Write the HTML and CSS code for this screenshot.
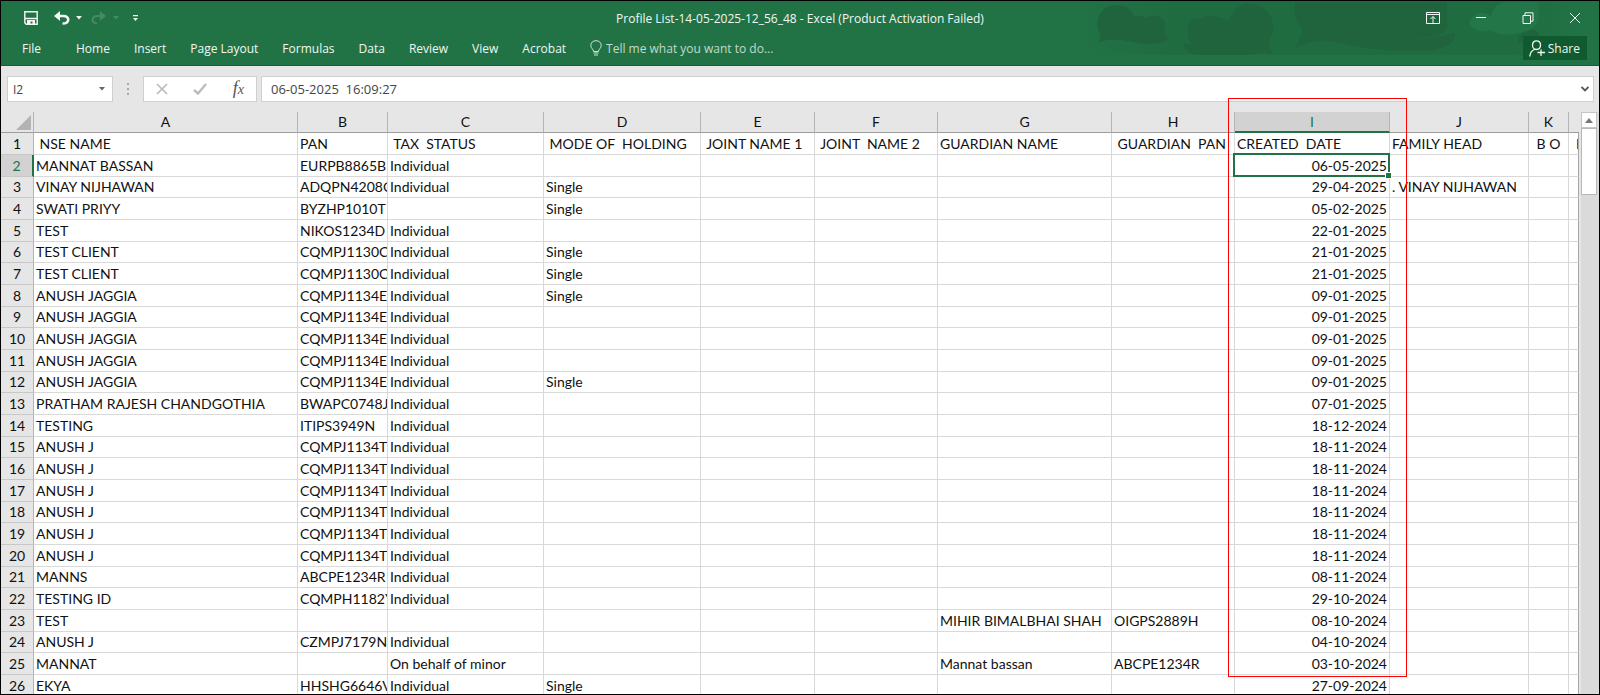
FILE: index.html
```html
<!DOCTYPE html>
<html lang="en">
<head>
<meta charset="utf-8">
<title>Profile List-14-05-2025-12_56_48 - Excel</title>
<link rel="stylesheet" href="styles.css">
</head>
<body>
<div class="window">
  <header class="ribbon">
    <svg class="clouds" viewBox="0 0 540 66" aria-hidden="true">
      <defs><linearGradient id="haze"><stop offset="0" stop-color="#206c41" stop-opacity="0"/><stop offset=".2" stop-color="#206c41"/><stop offset=".85" stop-color="#206c41"/><stop offset="1" stop-color="#206c41" stop-opacity="0"/></linearGradient></defs>
      <path fill="url(#haze)" d="M10 0H530V54H10Z"/>
      <path d="M39 41C42 38 42 35 40 31C34 14 46 4 58 4C68 4 74 10 75 16C80 14 85 15 87 17C94 12 105 15 106 24V35L110 37C106 43 90 44 78 42C66 39 52 37 39 41Z"/>
      <path d="M129 29C128 21 134 17 142 18C148 12 159 15 170 20C172 10 180 3 190 3C207 3 216 17 214 31C208 40 210 46 214 53L205 51L190 54H140C130 53 123 48 125 42C128 43 130 43 133 44C129 40 129 35 129 29Z"/>
      <path d="M236 1H388V24C388 31 383 37 348 38C366 40 382 35 396 32C398 42 383 50 365 50C330 50 305 48 280 42C262 38 247 41 237 47C240 39 241 34 244 28C236 22 235 11 236 1Z"/>
      <path d="M459 37C463 30 470 28 475 29C481 31 482 37 479 42H459Z"/>
      <path class="cloud-light" d="M410 22C414 10 426 9 432 16C434 6 440 2 446 1H478C482 10 481 25 470 29C460 34 440 36 432 29C424 32 413 30 410 22Z"/>
    </svg>
    <div class="titlebar">
      <div class="quick">
        <button class="icon save" aria-label="Save"><svg width="14" height="14" viewBox="0 0 14 14"><path class="line" stroke-width="1.4" d="M.8.8H13.2V13.2H2.2L.8 11.8ZM1 7.5H13"/><path class="fill" d="M3 9H11V13H8.500V10.500H6.500V13H3Z"/></svg></button>
        <button class="icon undo" aria-label="Undo"><svg width="16" height="14" viewBox="0 0 16 14"><path class="fill" d="M0 5L6 0V10Z"/><path class="line" stroke-width="2.600" d="M4 5H9.500C16 5 16 12.500 8.500 12.500"/></svg></button>
        <button class="icon caret" aria-label="Undo list"><svg width="6" height="4" viewBox="0 0 6 4"><path class="fill" d="M0 0H6L3 3.500Z"/></svg></button>
        <button class="icon redo dim" aria-label="Redo"><svg width="16" height="14" viewBox="0 0 16 14"><path class="fill" d="M15 5L9 0V10Z"/><path class="line" stroke-width="2" d="M11 5H6.500C0 5 0 12.500 6 12.500"/></svg></button>
        <button class="icon caret dim" aria-label="Redo list"><svg width="6" height="4" viewBox="0 0 6 4"><path class="fill" d="M0 0H6L3 3.500Z"/></svg></button>
        <button class="icon more" aria-label="Customize toolbar"><svg width="5" height="6" viewBox="0 0 5 6"><path class="fill" d="M0 0H5V1.200H0ZM0 3H5L2.500 6Z"/></svg></button>
      </div>
      <h1 class="title">Profile List-14-05-2025-12_56_48 - Excel (Product Activation Failed)</h1>
      <div class="controls">
        <button class="icon" aria-label="Ribbon display options"><svg width="14" height="12" viewBox="0 0 14 12"><path class="line" d="M.5.5H13.500V11.500H.5ZM.5 2.500H13.500M7 11V4.500M4.500 7L7 4.500L9.500 7"/></svg></button>
        <button class="icon" aria-label="Minimize"><svg width="12" height="12" viewBox="0 0 12 12"><path class="line" d="M1 5.500H11"/></svg></button>
        <button class="icon" aria-label="Restore"><svg width="12" height="12" viewBox="0 0 12 12"><path class="line" d="M1 3.500H8.500V11.500H1ZM3 3V.8H11V9.200H9"/></svg></button>
        <button class="icon" aria-label="Close"><svg width="12" height="12" viewBox="0 0 12 12"><path class="line" d="M1 1L11 11M11 1L1 11"/></svg></button>
      </div>
    </div>
    <nav class="tabs">
      <a class="file" href="#file">File</a>
      <a href="#home">Home</a>
      <a href="#insert">Insert</a>
      <a href="#layout">Page Layout</a>
      <a href="#formulas">Formulas</a>
      <a href="#data">Data</a>
      <a href="#review">Review</a>
      <a href="#view">View</a>
      <a href="#acrobat">Acrobat</a>
      <label class="tell"><svg width="12" height="16" viewBox="0 0 12 16"><path class="line" d="M3.500 11.500C3.500 9 .8 8.500.8 5.500C.8 2.500 3 .7 6 .7S11.200 2.500 11.200 5.500C11.200 8.500 8.500 9 8.500 11.500ZM3.500 13H8.500M4 15H8"/></svg><input type="text" aria-label="Tell me" placeholder="Tell me what you want to do..."></label>
      <button class="share"><svg width="16" height="17" viewBox="0 0 16 17"><path class="line" stroke-width="1.300" d="M7.500.8C10 .8 11.500 2.500 11.500 5S10 9.500 7.500 9.500S3.500 7.500 3.500 5S5 .8 7.500.8ZM5.500 9.500C3 10.500 1 13 .8 16.500M12 9.500V16M8.500 12.500H16"/></svg>Share</button>
    </nav>
  </header>

  <div class="formula-bar">
    <div class="box name-box">
      <input type="text" aria-label="Name box" value="I2">
      <button class="icon" aria-label="Names"><svg width="6" height="4" viewBox="0 0 6 4"><path d="M0 0H6L3 3.500Z" fill="#666"/></svg></button>
    </div>
    <svg class="grip" width="3" height="12" viewBox="0 0 3 12"><path d="M0 0H2V2H0ZM0 5H2V7H0ZM0 10H2V12H0Z" fill="#a8a8a8"/></svg>
    <div class="box edit-box">
      <button class="icon" aria-label="Cancel"><svg width="12" height="12" viewBox="0 0 12 12"><path d="M1 1L11 11M11 1L1 11" fill="none" stroke="#b9b9b9" stroke-width="1.600"/></svg></button>
      <button class="icon" aria-label="Enter"><svg width="14" height="12" viewBox="0 0 14 12"><path d="M1 7L5 10.500L13 1" fill="none" stroke="#bcbcbc" stroke-width="2.400"/></svg></button>
      <button class="icon fx" aria-label="Insert function">f<small>x</small></button>
    </div>
    <div class="box formula">
      <input type="text" aria-label="Formula" value="06-05-2025  16:09:27">
      <button class="icon" aria-label="Expand"><svg width="8" height="6" viewBox="0 0 8 6"><path d="M.5 1L4 4.500L7.500 1" fill="none" stroke="#555" stroke-width="1.800"/></svg></button>
    </div>
  </div>

  <main class="sheet">
    <div class="grid-area">
      <table class="grid">
        <colgroup><col class="c-num"><col class="c-a"><col class="c-b"><col class="c-c"><col class="c-d"><col class="c-e"><col class="c-f"><col class="c-g"><col class="c-h"><col class="c-i"><col class="c-j"><col class="c-k"><col></colgroup>
        <thead>
          <tr><th class="corner"><svg width="15" height="15" viewBox="0 0 15 15"><path d="M15 0V15H0Z" fill="#b3b3b3"/></svg></th><th>A</th><th>B</th><th>C</th><th>D</th><th>E</th><th>F</th><th>G</th><th>H</th><th class="active-col">I<span class="highlight"></span></th><th>J</th><th>K</th><th></th></tr>
        </thead>
        <tbody>
          <tr><th>1<td> NSE NAME<td>PAN<td> TAX  STATUS<td> MODE OF  HOLDING<td> JOINT NAME 1<td> JOINT  NAME 2<td>GUARDIAN NAME<td> GUARDIAN  PAN<td class="head">CREATED  DATE<td>FAMILY HEAD<td class="mid">B O<td class="cut">D</tr>
          <tr class="active-row"><th>2<td>MANNAT BASSAN<td>EURPB8865B<td>Individual<td><td><td><td><td><td class="selected">06-05-2025<td><td><td></tr>
          <tr><th>3<td>VINAY NIJHAWAN<td>ADQPN4208C<td>Individual<td>Single<td><td><td><td><td>29-04-2025<td>. VINAY NIJHAWAN<td><td></tr>
          <tr><th>4<td>SWATI PRIYY<td>BYZHP1010T<td><td>Single<td><td><td><td><td>05-02-2025<td><td><td></tr>
          <tr><th>5<td>TEST<td>NIKOS1234D<td>Individual<td><td><td><td><td><td>22-01-2025<td><td><td></tr>
          <tr><th>6<td>TEST CLIENT<td>CQMPJ1130C<td>Individual<td>Single<td><td><td><td><td>21-01-2025<td><td><td></tr>
          <tr><th>7<td>TEST CLIENT<td>CQMPJ1130C<td>Individual<td>Single<td><td><td><td><td>21-01-2025<td><td><td></tr>
          <tr><th>8<td>ANUSH JAGGIA<td>CQMPJ1134E<td>Individual<td>Single<td><td><td><td><td>09-01-2025<td><td><td></tr>
          <tr><th>9<td>ANUSH JAGGIA<td>CQMPJ1134E<td>Individual<td><td><td><td><td><td>09-01-2025<td><td><td></tr>
          <tr><th>10<td>ANUSH JAGGIA<td>CQMPJ1134E<td>Individual<td><td><td><td><td><td>09-01-2025<td><td><td></tr>
          <tr><th>11<td>ANUSH JAGGIA<td>CQMPJ1134E<td>Individual<td><td><td><td><td><td>09-01-2025<td><td><td></tr>
          <tr><th>12<td>ANUSH JAGGIA<td>CQMPJ1134E<td>Individual<td>Single<td><td><td><td><td>09-01-2025<td><td><td></tr>
          <tr><th>13<td>PRATHAM RAJESH CHANDGOTHIA<td>BWAPC0748J<td>Individual<td><td><td><td><td><td>07-01-2025<td><td><td></tr>
          <tr><th>14<td>TESTING<td>ITIPS3949N<td>Individual<td><td><td><td><td><td>18-12-2024<td><td><td></tr>
          <tr><th>15<td>ANUSH J<td>CQMPJ1134T<td>Individual<td><td><td><td><td><td>18-11-2024<td><td><td></tr>
          <tr><th>16<td>ANUSH J<td>CQMPJ1134T<td>Individual<td><td><td><td><td><td>18-11-2024<td><td><td></tr>
          <tr><th>17<td>ANUSH J<td>CQMPJ1134T<td>Individual<td><td><td><td><td><td>18-11-2024<td><td><td></tr>
          <tr><th>18<td>ANUSH J<td>CQMPJ1134T<td>Individual<td><td><td><td><td><td>18-11-2024<td><td><td></tr>
          <tr><th>19<td>ANUSH J<td>CQMPJ1134T<td>Individual<td><td><td><td><td><td>18-11-2024<td><td><td></tr>
          <tr><th>20<td>ANUSH J<td>CQMPJ1134T<td>Individual<td><td><td><td><td><td>18-11-2024<td><td><td></tr>
          <tr><th>21<td>MANNS<td>ABCPE1234R<td>Individual<td><td><td><td><td><td>08-11-2024<td><td><td></tr>
          <tr><th>22<td>TESTING ID<td>CQMPH1182Y<td>Individual<td><td><td><td><td><td>29-10-2024<td><td><td></tr>
          <tr><th>23<td>TEST<td><td><td><td><td><td>MIHIR BIMALBHAI SHAH<td>OIGPS2889H<td>08-10-2024<td><td><td></tr>
          <tr><th>24<td>ANUSH J<td>CZMPJ7179N<td>Individual<td><td><td><td><td><td>04-10-2024<td><td><td></tr>
          <tr><th>25<td>MANNAT<td><td>On behalf of minor<td><td><td><td>Mannat bassan<td>ABCPE1234R<td>03-10-2024<td><td><td></tr>
          <tr><th>26<td>EKYA<td>HHSHG6646V<td>Individual<td>Single<td><td><td><td><td>27-09-2024<td><td><td></tr>
        </tbody>
      </table>
    </div>
    <div class="scrollbar">
      <button class="icon up" aria-label="Scroll up"><svg width="8" height="5" viewBox="0 0 8 5"><path d="M0 5L4 0L8 5Z" fill="#777"/></svg></button>
      <div class="thumb"></div>
    </div>
  </main>
</div>
</body>
</html>
```

FILE: styles.css
```css
* { box-sizing: border-box; }
body { margin: 0; font-family: "Open Sans", "Noto Sans", sans-serif; font-size: 12px; background: #e6e6e6; }
input, button { font: inherit; color: inherit; border: 0; padding: 0; background: none; outline: 0; min-width: 0; }
svg { display: block; flex: none; }
.window { height: 100vh; display: flex; flex-direction: column; overflow: hidden; border: 1px solid #000; background: #e6e6e6; }
.icon { display: grid; place-items: center; }
.line { fill: none; stroke: currentColor; }
.fill { fill: currentColor; }

.ribbon { position: relative; flex: none; color: #f2f7f4; background: #217346; border-bottom: 1px solid #185c37; height: 65px; }
.clouds { position: absolute; right: 0; top: 0; width: 540px; height: 66px; fill: #1f643d; }
.cloud-light { fill: #237648; }
.titlebar { position: relative; display: grid; grid-template-columns: 1fr auto 1fr; align-items: center; height: 34px; }
.quick { display: flex; align-items: center; padding-left: 23px; }
.undo { margin-left: 16px; }
.caret { margin-left: 6px; }
.redo { margin-left: 9px; }
.more { margin-left: 14px; }
.dim { color: #448a65; }
.title { margin: 0; font-size: 12px; font-weight: 400; white-space: nowrap; }
.controls { display: flex; justify-content: flex-end; gap: 35px; padding-right: 18px; }
.tabs { position: relative; display: flex; align-items: center; gap: 24px; height: 26px; padding: 0 12px 0 21px; white-space: nowrap; }
.tabs a { color: inherit; text-decoration: none; }
.tabs .file { margin-right: 11px; }
.tell { display: flex; align-items: center; gap: 4px; color: #d0e3d8; }
.tell input { width: 190px; }
.tell input::placeholder { color: #c2dacc; opacity: 1; }
.share { display: flex; align-items: center; gap: 3px; height: 24px; margin-left: auto; padding: 0 7px 0 6px; background: #0f5a2f; }

.formula-bar { flex: none; display: flex; align-items: center; gap: 4px; height: 46px; padding: 0 5px 0 6px; color: #444; }
.box { display: flex; align-items: center; height: 26px; background: #fff; border: 1px solid #cfcfcf; }
.name-box { width: 106px; padding: 0 7px 0 5px; }
.name-box input { flex: 1; }
.grip { margin: 0 9px 0 10px; }
.edit-box { width: 114px; justify-content: space-between; padding: 0 12px; }
.fx { font: italic 18px/20px "Liberation Serif", serif; color: #555; display: flex; align-items: baseline; }
.fx small { font-size: 14px; }
.formula { flex: 1; padding: 0 4px 0 9px; font-size: 13px; }
.formula input { flex: 1; }

.sheet { flex: 1; min-height: 0; display: flex; gap: 2px; }
.grid-area { flex: 1; min-width: 0; }
.grid { width: 100%; table-layout: fixed; border-collapse: separate; border-spacing: 0; font: 14px/20px Lato, sans-serif; color: #111; }
.c-num { width: 33px; }
.c-a { width: 264px; }
.c-b { width: 90px; }
.c-c { width: 156px; }
.c-d { width: 157px; }
.c-e { width: 114px; }
.c-f { width: 123px; }
.c-g { width: 174px; }
.c-h { width: 123px; }
.c-i { width: 155px; }
.c-j { width: 139px; }
.c-k { width: 40px; }
.grid th { padding: 0; font-weight: 400; text-align: center; background: #e6e6e6; border-right: 1px solid #b4b4b4; }
.grid thead th { height: 21px; line-height: 20px; border-bottom: 1px solid #9c9c9c; }
.grid thead th:last-child { border-right: 0; }
.corner svg { margin: 0 2px 0 auto; }
.grid thead .active-col { position: relative; line-height: 19px; background: #d2d2d2; border-bottom: 2px solid #217346; color: #217346; }
.grid tbody th { border-bottom: 1px solid #c8c8c8; }
.grid .active-row th { background: #d2d2d2; color: #217346; border-right: 2px solid #217346; }
.grid td { height: 22px; padding: 1px 2px 0; white-space: pre; overflow: hidden; background: #fff; border-right: 1px solid #d9d9d9; border-bottom: 1px solid #d9d9d9; }
.grid tbody tr:nth-child(3n) td { height: 21px; padding-top: 0; }
.grid td:last-child { border-right-color: #a6a6a6; }
.grid td:nth-child(10) { text-align: right; }
.grid td.head { text-align: left; }
.grid td.mid { text-align: center; }
.grid td.cut { padding-left: 7px; }
.grid td.selected { position: relative; overflow: visible; }
.selected::before { content: ""; position: absolute; inset: -2px -1px -1px -2px; border: 2px solid #217346; }
.selected::after { content: ""; position: absolute; right: -2px; bottom: -2px; width: 5px; height: 5px; background: #217346; outline: 1px solid #fff; }
.highlight { position: absolute; z-index: 2; top: -14px; left: -7px; right: -18px; height: 579px; border: 1px solid #f00; }

.scrollbar { flex: none; width: 18px; background: #dadada; }
.up { width: 16px; height: 16px; background: #fff; border: 1px solid #c6c6c6; }
.thumb { width: 16px; height: 67px; background: #fff; border: 1px solid #b8b8b8; }
```
